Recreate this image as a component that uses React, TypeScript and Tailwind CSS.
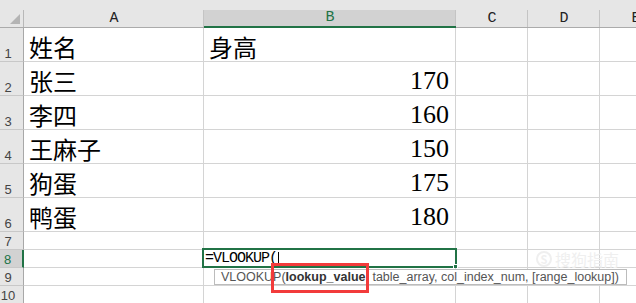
import React from "react";

const CJK = "font-['Noto_Sans_CJK_SC',_'Noto_Sans',_sans-serif]";

type Row = { n: number; h: string; a?: string; b?: string | number };

const rows: Row[] = [
  { n: 1, h: "h-[34px]", a: "姓名", b: "身高" },
  { n: 2, h: "h-[34px]", a: "张三", b: 170 },
  { n: 3, h: "h-[34px]", a: "李四", b: 160 },
  { n: 4, h: "h-[34px]", a: "王麻子", b: 150 },
  { n: 5, h: "h-[34px]", a: "狗蛋", b: 175 },
  { n: 6, h: "h-[34px]", a: "鸭蛋", b: 180 },
  { n: 7, h: "h-[18px]" },
  { n: 8, h: "h-[18px]" },
  { n: 9, h: "h-[18px]" },
  { n: 10, h: "h-[18px]" },
];

const colHead = [
  { l: "A", w: "w-[180px]", sel: false },
  { l: "B", w: "w-[252px]", sel: true },
  { l: "C", w: "w-[72px]", sel: false },
  { l: "D", w: "w-[72px]", sel: false },
  { l: "E", w: "w-[72px]", sel: false },
];

function HeaderRow() {
  return (
    <div className="flex h-[28px] shrink-0 border-b border-[#ababab] bg-[#e6e6e6]">
      {/* corner with select-all triangle */}
      <div className="relative w-[24px] shrink-0">
        <div className="absolute bottom-0 right-0 top-[10px] w-px bg-[#b8b8b8]" />
        <svg className="absolute left-[10px] top-[14px]" width="10" height="10" viewBox="0 0 10 10">
          <polygon points="10,0 10,10 0,10" fill="#b4b4b4" />
        </svg>
      </div>
      {colHead.map((c) => (
        <div key={c.l} className={`${c.w} shrink-0 flex flex-col`}>
          <div className={`mt-[10px] flex h-[17px] items-end justify-center border-r border-[#c4c4c4] pb-[1px] ${c.sel ? "bg-[#d2d2d2] text-[#217346]" : "text-[#222]"}`}>
            <span className="font-['Liberation_Mono',_monospace] text-[15px] leading-[15px] tracking-[-1px]">{c.l}</span>
          </div>
          {c.sel && <div className="-mb-px h-[2px] bg-[#217346]" />}
        </div>
      ))}
    </div>
  );
}

function SheetRow({ r }: { r: Row }) {
  const active = r.n === 8;
  return (
    <div className={`flex ${r.h} shrink-0`}>
      <div
        className={`flex w-[24px] shrink-0 items-end justify-center border-b border-[#c8c8c8] pb-[1px] pr-[7px] ${
          active ? "border-r-2 border-r-[#217346] bg-[#d2d2d2] text-[#217346]" : "border-r border-r-[#a8a8a8] bg-[#e6e6e6] text-[#444]"
        }`}
      >
        <span className="font-['Liberation_Sans',_sans-serif] text-[13px] leading-[13px]">{r.n}</span>
      </div>
      <div className={`flex w-[180px] shrink-0 items-end border-b border-r border-[#d4d4d4] pl-[5px] text-[24px] leading-[26px] text-black ${CJK}`}>
        {r.a && <span className="pb-[1px]">{r.a}</span>}
      </div>
      <div className="relative flex w-[252px] shrink-0 items-end border-b border-r border-[#d4d4d4]">
        {typeof r.b === "string" && (
          <span className={`pb-[1px] pl-[5px] text-[24px] leading-[26px] text-black ${CJK}`}>{r.b}</span>
        )}
        {typeof r.b === "number" && (
          <span className="w-full pb-[1px] pr-[6px] text-right font-['Liberation_Serif',_serif] text-[26px] leading-[26px] text-black">
            {r.b}
          </span>
        )}
        {active && (
          <>
            <div className="flex h-full items-center pl-[1px] font-['Liberation_Mono',_monospace] text-[15px] leading-[16px] tracking-[-1px] text-black">
              =VLOOKUP(
              <span className="ml-[1px] inline-block h-[13px] w-px bg-black" />
            </div>
            <div className="pointer-events-none absolute -bottom-px -left-[2px] -right-[2px] -top-[2px] border-2 border-[#217346]" />
            <div className="absolute -bottom-[2px] -right-[3px] h-[5px] w-[5px] border border-white bg-[#217346]" />
          </>
        )}
      </div>
      <div className="w-[72px] shrink-0 border-b border-r border-[#d4d4d4]" />
      <div className="w-[72px] shrink-0 border-b border-r border-[#d4d4d4]" />
      <div className="w-[72px] shrink-0 border-b border-r border-[#d4d4d4]" />
    </div>
  );
}

export default function App() {
  return (
    <div className="relative h-[303px] w-[636px] overflow-hidden bg-white">
      <div className="flex flex-col">
        <HeaderRow />
        {rows.map((r) => (
          <SheetRow key={r.n} r={r} />
        ))}
      </div>

      {/* faint site mark */}
      <div className={`pointer-events-none absolute left-[536px] top-[250px] flex items-center gap-[3px] text-[#efefef] ${CJK}`}>
        <span className="flex h-[16px] w-[16px] items-center justify-center rounded-full border-2 border-[#efefef] text-[11px] font-bold leading-none">S</span>
        <span className="text-[16px] leading-[18px]">搜狗指南</span>
      </div>

      {/* function argument tooltip */}
      <div className="absolute left-[214px] top-[269px] flex h-[16px] w-[413px] items-start border border-[#bcbcbc] bg-white pl-[6px] font-['Liberation_Sans',_sans-serif] text-[12.5px] leading-[14px] text-[#555] whitespace-nowrap">
        VLOOKUP(<span className="font-bold text-[#333]">lookup_value</span>, table_array, col_index_num, [range_lookup])
      </div>

      {/* highlight frame */}
      <div className="absolute left-[271px] top-[263px] h-[30px] w-[98px] border-[3px] border-[#f23b3b]" />
    </div>
  );
}
